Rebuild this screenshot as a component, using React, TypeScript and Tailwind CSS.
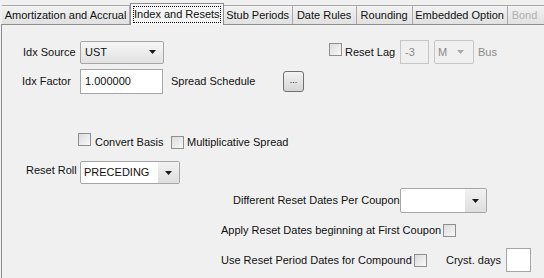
import React from 'react';

const Arrow = ({ muted }: { muted?: boolean }) => (
  <svg width="7" height="4" viewBox="0 0 7 4">
    <path d="M0 0h7L3.5 4z" fill={muted ? '#a8a8a8' : '#1a1a1a'} />
  </svg>
);

const Check = () => (
  <span className="inline-block w-[13px] h-[13px] border border-[#8e8f8f] bg-gradient-to-br from-[#dcdcdc] to-[#f8f8f8] shrink-0" />
);

const Tab = ({ label, w, active, disabled }: { label: string; w: string; active?: boolean; disabled?: boolean }) =>
  active ? (
    <div className={`${w} h-[22px] -mb-[1px] px-[2px] pt-[2px] border border-b-0 border-[#8d8d8d] bg-[#f4f4f4] relative z-10`}>
      <span className="border border-dotted border-black leading-[15px] block text-center">{label}</span>
    </div>
  ) : (
    <div
      className={`${w} shrink-0 h-[19px] leading-[18px] text-center border border-[#a9a9a9] border-b-0 border-l-0 bg-gradient-to-b from-[#f2f2f2] to-[#e1e1e1] overflow-hidden ${
        disabled ? 'text-[#b0b0b0] text-left pl-[4px]' : ''
      }`}
    >
      {label}
    </div>
  );

export default function App() {
  return (
    <div
      className="w-[544px] h-[278px] bg-[#f0f0f0] overflow-hidden text-[11px] text-[#111] flex flex-col"
      style={{ fontFamily: '"Liberation Sans", Arial, sans-serif' }}
    >
      <div className="flex items-end h-[24px] pl-[2px] pt-[2px] whitespace-nowrap">
        <div className="h-[19px] w-[1px] bg-[#a9a9a9]" />
        <Tab label="Amortization and Accrual" w="w-[128px]" />
        <Tab label="Index and Resets" w="w-[98px]" active />
        <Tab label="Stub Periods" w="w-[69px]" />
        <Tab label="Date Rules" w="w-[64px]" />
        <Tab label="Rounding" w="w-[56px]" />
        <Tab label="Embedded Option" w="w-[95px]" />
        <Tab label="Bond" w="w-[40px]" disabled />
      </div>
      <div className="flex-1 border-t border-l border-[#8d8d8d] ml-[1px] bg-[#f0f0f0] relative whitespace-nowrap">
        {/* row 1 */}
        <div className="flex items-center h-[24px] mt-[15px]">
          <span className="ml-[21px] w-[57px]">Idx Source</span>
          <div className="w-[84px] h-[23px] border border-[#a6a6a6] rounded-[2px] bg-gradient-to-b from-[#f6f6f6] to-[#e2e2e2] flex items-center justify-between pl-[4px] pr-[7px]">
            <span>UST</span>
            <Arrow />
          </div>
          <div className="ml-[165px]">
            <Check />
          </div>
          <span className="ml-[3px] w-[55px]">Reset Lag</span>
          <div className="w-[29px] h-[24px] border border-[#c6c6c6] bg-[#f0f0f0] text-[#8a8a8a] flex items-center pl-[4px]">-3</div>
          <div className="ml-[5px] w-[40px] h-[24px] border border-[#c6c6c6] rounded-[2px] bg-[#f0f0f0] text-[#8a8a8a] flex items-center justify-between pl-[3px] pr-[9px]">
            <span>M</span>
            <Arrow muted />
          </div>
          <span className="ml-[4px] text-[#8a8a8a]">Bus</span>
        </div>
        {/* row 2 */}
        <div className="flex items-center h-[25px] mt-[5px]">
          <span className="ml-[20px] w-[58px]">Idx Factor</span>
          <div className="w-[83px] h-[25px] border border-[#a6a6a6] bg-white flex items-center pl-[4px]">1.000000</div>
          <span className="ml-[8px] w-[112px]">Spread Schedule</span>
          <div className="w-[21px] h-[21px] border border-[#707070] rounded-[3px] bg-gradient-to-b from-[#f2f2f2] to-[#d6d6d6] flex items-center justify-center text-[9px] leading-none pb-[2px]">
            ...
          </div>
        </div>
        {/* row 3 */}
        <div className="flex items-center h-[14px] mt-[41px]">
          <div className="ml-[76px]">
            <Check />
          </div>
          <span className="ml-[4px] w-[76px]">Convert Basis</span>
          <Check />
          <span className="ml-[3px]">Multiplicative Spread</span>
        </div>
        {/* row 4 */}
        <div className="flex items-center h-[23px] mt-[12px]">
          <span className="ml-[24px] w-[54px] -mt-[4px]">Reset Roll</span>
          <div className="w-[100px] h-[23px] border border-[#a6a6a6] rounded-[2px] bg-white flex items-center">
            <span className="pl-[3px] flex-1">PRECEDING</span>
            <div className="w-[21px] h-full bg-gradient-to-b from-[#f2f2f2] to-[#dedede] flex items-center justify-center">
              <Arrow />
            </div>
          </div>
        </div>
        {/* row 5 */}
        <div className="flex items-center h-[25px] mt-[4px]">
          <span className="ml-[231px] w-[167px]">Different Reset Dates Per Coupon</span>
          <div className="w-[87px] h-[25px] border border-[#a6a6a6] rounded-[2px] bg-white flex items-center justify-end">
            <div className="w-[21px] h-full bg-gradient-to-b from-[#f2f2f2] to-[#dedede] flex items-center justify-center">
              <Arrow />
            </div>
          </div>
        </div>
        {/* row 6 */}
        <div className="flex items-center h-[14px] mt-[10px]">
          <span className="ml-[219px] w-[222px]">Apply Reset Dates beginning at First Coupon</span>
          <Check />
        </div>
        {/* row 7 */}
        <div className="flex items-center h-[24px] mt-[11px]">
          <span className="ml-[219px] w-[193px]">Use Reset Period Dates for Compound</span>
          <Check />
          <span className="ml-[19px] w-[60px]">Cryst. days</span>
          <div className="w-[25px] h-[24px] border border-[#a6a6a6] bg-white" />
        </div>
      </div>
    </div>
  );
}
